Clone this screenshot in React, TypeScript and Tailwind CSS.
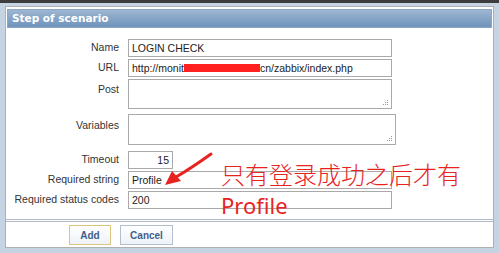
import React from 'react';

const labelCls = 'whitespace-nowrap text-right pr-[9px] text-[10.5px] text-[#333]';
const inputCls =
  'h-[18px] border border-[#a9a9a9] bg-white px-[3px] text-[10.5px] leading-[16px] text-[#222] flex items-center whitespace-nowrap';

function Resize() {
  return (
    <svg className="absolute right-[2px] bottom-[2px]" width="7" height="7" viewBox="0 0 7 7">
      <rect x="5" y="1" width="1" height="1" fill="#999" />
      <rect x="3" y="3" width="1" height="1" fill="#999" />
      <rect x="5" y="3" width="1" height="1" fill="#999" />
      <rect x="1" y="5" width="1" height="1" fill="#999" />
      <rect x="3" y="5" width="1" height="1" fill="#999" />
      <rect x="5" y="5" width="1" height="1" fill="#999" />
    </svg>
  );
}

export default function App() {
  return (
    <div
      className="relative w-[499px] h-[253px] overflow-hidden bg-[#c5d3e2] border-t-[3px] border-[#3d3d3d]"
      style={{ fontFamily: '"Liberation Sans", Arial, sans-serif' }}
    >
      <div className="ml-[5px] mr-[5px] mt-[3px] h-[242px] bg-white border border-[#b0b0b0] flex flex-col">
        {/* Header */}
        <div className="mx-[1px] mt-[2px] h-[19px] bg-gradient-to-b from-[#9db6d2] to-[#6f93ba] border border-[#8ca6c4] flex items-center pl-[4px]">
          <span
            className="text-white font-bold text-[10.5px]"
            style={{ fontFamily: '"DejaVu Sans", sans-serif' }}
          >
            Step of scenario
          </span>
        </div>

        {/* Form */}
        <div className="flex-1 pt-[11px] grid grid-cols-[122px_1fr] auto-rows-min gap-y-[2px] content-start">
          <div className={labelCls + ' self-center'}>Name</div>
          <div className={inputCls + ' w-[264px]'}>LOGIN CHECK</div>

          <div className={labelCls + ' self-center'}>URL</div>
          <div className={inputCls + ' w-[264px]'}>
            <span>http://monit</span>
            <span className="inline-block w-[76px] h-[8px] bg-[#ff2020]" />
            <span>cn/zabbix/index.php</span>
          </div>

          <div className={labelCls + ' pt-[3px]'}>Post</div>
          <div className="relative w-[264px] h-[30px] border border-[#a9a9a9] bg-white">
            <Resize />
          </div>

          <div className={labelCls + ' pt-[4px] mt-[3px]'}>Variables</div>
          <div className="relative mt-[3px] w-[268px] h-[31px] border border-[#a9a9a9] bg-white">
            <Resize />
          </div>

          <div className={labelCls + ' self-center mt-[4px]'}>Timeout</div>
          <div className={inputCls + ' w-[45px] justify-end mt-[4px]'}>15</div>

          <div className={labelCls + ' self-center'}>Required string</div>
          <div className={inputCls + ' w-[264px]'}>Profile</div>

          <div className={labelCls + ' self-center'}>Required status codes</div>
          <div className={inputCls + ' w-[264px]'}>200</div>
        </div>

        {/* Footer */}
        <div className="h-[28px] border-t-[3px] border-double border-[#b0b8c2] flex items-center gap-[9px] pl-[63px] pt-[1px]">
          <button className="h-[20px] w-[42px] border border-[#dcc67c] bg-gradient-to-b from-white to-[#eef2f7] text-[10px] font-bold text-[#3f5f8a]">
            Add
          </button>
          <button className="h-[20px] w-[53px] border border-[#b3bfcc] bg-gradient-to-b from-white to-[#eef2f7] text-[10px] font-bold text-[#3f5f8a]">
            Cancel
          </button>
        </div>
      </div>

      {/* Annotation overlay */}
      <svg className="absolute left-0 top-0" width="499" height="253" viewBox="0 0 499 253">
        <path d="M211 151 Q190 166 176 174" stroke="#e8231f" strokeWidth="3" fill="none" strokeLinecap="round" />
        <path d="M165 182 L172 168 L181 178 Z" fill="#e8231f" />
      </svg>
      <div
        className="absolute left-[221px] top-[156px] text-[24px] leading-[30px] text-[#e8231f]"
        style={{ fontFamily: '"Noto Sans CJK SC", sans-serif', fontWeight: 300 }}
      >
        只有登录成功之后才有
      </div>
      <div
        className="absolute left-[221px] top-[188px] text-[22px] leading-[28px] text-[#e8231f]"
        style={{ fontFamily: '"Noto Sans", sans-serif' }}
      >
        Profile
      </div>
    </div>
  );
}
